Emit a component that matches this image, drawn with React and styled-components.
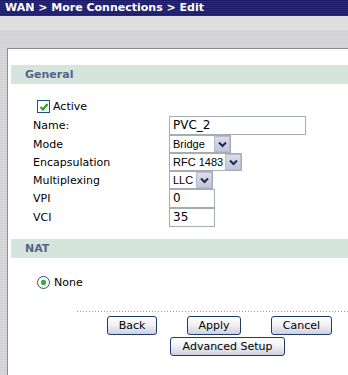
import React from 'react'
import styled, { createGlobalStyle } from 'styled-components'

const GlobalStyle = createGlobalStyle`
    html, body {
        margin: 0;
        padding: 0;
        background: #ffffff;
        overflow: hidden;
    }
    body {
        font-family: 'DejaVu Sans', Verdana, sans-serif;
        font-size: 11px;
        color: #000;
    }
`

const Page = styled.div`
    width: 348px;
    height: 375px;
    display: flex;
    flex-direction: column;
`

const TitleBar = styled.div`
    height: 16px;
    flex-shrink: 0;
    padding-left: 5px;
    line-height: 16px;
    font-weight: bold;
    font-size: 11px;
    color: #ffffff;
    white-space: nowrap;
    background: repeating-linear-gradient(to bottom, #1a1a68 0 1px, #2a2c80 1px 2px);
`

const Body = styled.div`
    flex: 1;
    display: flex;
    padding-top: 32px;
    background: linear-gradient(to bottom, #dfdfdf 0, #dfdfdf 14px, transparent 14px),
        repeating-linear-gradient(to bottom, #d9d9dc 0 1px, #cfd0d6 1px 2px);
`

const LeftStrip = styled.div`
    width: 7px;
    flex-shrink: 0;
`

const Panel = styled.div`
    flex: 1;
    background: #ffffff;
    border-top: 1px solid #8c8c8c;
    border-left: 1px solid #8c8c8c;
    padding: 16px 0 0 3px;
    display: flex;
    flex-direction: column;
`

const SectionBar = styled.div`
    height: 19px;
    line-height: 19px;
    padding-left: 14px;
    background: #d6e5db;
    color: #56638a;
    font-weight: bold;
    font-size: 11px;
    margin-top: ${p => p.$top || 0}px;
`

const CheckRow = styled.label`
    display: flex;
    align-items: center;
    gap: 3px;
    margin: 16px 0 0 26px;
    height: 13px;
`

const CheckBox = styled.span`
    width: 11px;
    height: 11px;
    border: 1px solid #1c5180;
    background: #ffffff;
    display: flex;
    align-items: center;
    justify-content: center;
`

const Form = styled.div`
    display: grid;
    grid-template-columns: 136px auto;
    margin: 3px 0 0 22px;
    align-items: center;
`

const Label = styled.div`
    white-space: nowrap;
`

const TextInput = styled.div`
    box-sizing: border-box;
    width: ${p => p.$w}px;
    height: 19px;
    border: 1px solid #a5acb2;
    padding-left: 3px;
    font-size: 12px;
    line-height: 17px;
    background: #ffffff;
`

const Select = styled.div`
    box-sizing: border-box;
    width: ${p => p.$w}px;
    height: 18px;
    border: 1px solid #a5acb2;
    display: flex;
    align-items: center;
    justify-content: space-between;
    background: #ffffff;
    font-family: 'Liberation Sans', Arial, sans-serif;
    font-size: 11px;
    padding-left: 3px;
`

const DropButton = styled.span`
    box-sizing: border-box;
    width: 16px;
    height: 16px;
    margin-right: 0;
    border: 1px solid #b9bbcf;
    background: linear-gradient(to bottom, #dcdcea, #c3c5db);
    display: flex;
    align-items: center;
    justify-content: center;
`

const RadioRow = styled.label`
    display: flex;
    align-items: center;
    gap: 4px;
    margin: 18px 0 0 26px;
    height: 13px;
`

const Radio = styled.span`
    box-sizing: border-box;
    width: 13px;
    height: 13px;
    border-radius: 50%;
    border: 1px solid #2b5077;
    background: radial-gradient(circle, #3cae3c 0 2.5px, #ffffff 3px);
`

const Divider = styled.div`
    height: 1px;
    margin: 22px 0 0 66px;
    background: repeating-linear-gradient(to right, #9a9a9a 0 1px, transparent 1px 3px);
`

const ButtonRow = styled.div`
    display: flex;
    gap: 30px;
    margin: ${p => p.$top}px 0 0 ${p => p.$left}px;
`

const Button = styled.button`
    box-sizing: border-box;
    width: ${p => p.$w}px;
    height: 19px;
    padding: 0;
    border: 1px solid #1c3c68;
    border-radius: 3px;
    background: linear-gradient(to bottom, #ffffff 0%, #f2f2f6 45%, #cfd0de 100%);
    font-family: 'DejaVu Sans', Verdana, sans-serif;
    font-size: 11px;
    color: #000;
    line-height: 17px;
`

const Chevron = () => (
    <svg width="9" height="7" viewBox="0 0 9 7">
        <path d="M1 1.5 L4.5 5 L8 1.5" fill="none" stroke="#1e2b52" strokeWidth="2" />
    </svg>
)

const Check = () => (
    <svg width="10" height="10" viewBox="0 0 10 10">
        <path d="M1.5 5 L4 7.5 L8.5 2" fill="none" stroke="#1fa31f" strokeWidth="2" />
    </svg>
)

export default function App() {
    return (
        <Page>
            <GlobalStyle />
            <TitleBar>WAN &gt; More Connections &gt; Edit</TitleBar>
            <Body>
                <LeftStrip />
                <Panel>
                    <SectionBar>General</SectionBar>
                    <CheckRow>
                        <CheckBox>
                            <Check />
                        </CheckBox>
                        Active
                    </CheckRow>
                    <Form>
                        <Label>Name:</Label>
                        <TextInput $w={137}>PVC_2</TextInput>
                        <Label>Mode</Label>
                        <Select $w={62}>
                            Bridge
                            <DropButton><Chevron /></DropButton>
                        </Select>
                        <Label>Encapsulation</Label>
                        <Select $w={73}>
                            RFC 1483
                            <DropButton><Chevron /></DropButton>
                        </Select>
                        <Label>Multiplexing</Label>
                        <Select $w={44}>
                            LLC
                            <DropButton><Chevron /></DropButton>
                        </Select>
                        <Label>VPI</Label>
                        <TextInput $w={46}>0</TextInput>
                        <Label>VCI</Label>
                        <TextInput $w={46}>35</TextInput>
                    </Form>
                    <SectionBar $top={12}>NAT</SectionBar>
                    <RadioRow>
                        <Radio />
                        None
                    </RadioRow>
                    <Divider />
                    <ButtonRow $top={4} $left={96}>
                        <Button $w={50}>Back</Button>
                        <Button $w={54}>Apply</Button>
                        <Button $w={61}>Cancel</Button>
                    </ButtonRow>
                    <ButtonRow $top={2} $left={159}>
                        <Button $w={115}>Advanced Setup</Button>
                    </ButtonRow>
                </Panel>
            </Body>
        </Page>
    )
}
